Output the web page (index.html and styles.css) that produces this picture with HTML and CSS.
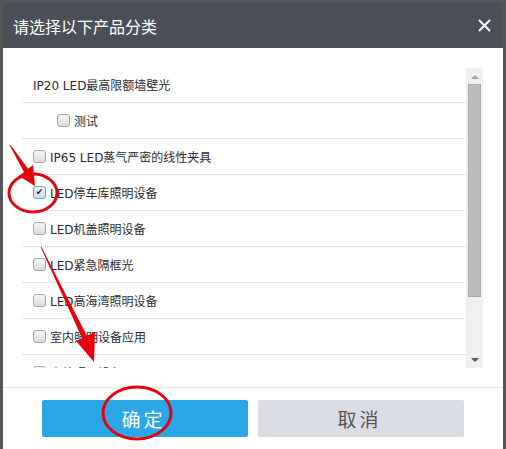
FILE: index.html
```html
<!DOCTYPE html>
<html>
<head>
    <title>请选择以下产品分类</title>
    <link rel="stylesheet" href="styles.css">
</head>
<body>
    <div class="dialog">
        <div class="dialog-header">
            <span class="dialog-title">请选择以下产品分类</span>
            <svg class="close" width="13" height="13" viewBox="0 0 13 13">
                <path d="M1 1 L12 12 M12 1 L1 12" stroke="#fff" stroke-width="2"/>
            </svg>
        </div>

        <div class="dialog-body">
            <div class="list-box">
                <ul class="cat-list">
                    <li class="cat-row">IP20 LED最高限额墙壁光</li>
                    <li class="cat-row sub"><span class="check"></span>测试</li>
                    <li class="cat-row"><span class="check"></span>IP65 LED蒸气严密的线性夹具</li>
                    <li class="cat-row"><span class="check checked">✔</span>LED停车库照明设备</li>
                    <li class="cat-row"><span class="check"></span>LED机盖照明设备</li>
                    <li class="cat-row"><span class="check"></span>LED紧急隔框光</li>
                    <li class="cat-row"><span class="check"></span>LED高海湾照明设备</li>
                    <li class="cat-row"><span class="check"></span>室内照明设备应用</li>
                    <li class="cat-row"><span class="check"></span>户外照明设备</li>
                </ul>
                <div class="scrollbar">
                    <span class="arrow up"></span>
                    <div class="thumb"></div>
                    <span class="arrow down"></span>
                </div>
            </div>
        </div>

        <div class="dialog-footer">
            <button class="btn btn-ok">确定</button>
            <button class="btn btn-cancel">取消</button>
        </div>
    </div>

    <!-- red marks drawn on top of the screenshot -->
    <svg class="marks" width="506" height="449" viewBox="0 0 506 449">
        <ellipse cx="33" cy="193" rx="24" ry="19" fill="none" stroke="#e8000b" stroke-width="3"/>
        <polygon points="9.5,145 10.5,145 29,170 24.5,173" fill="#e8000b"/>
        <polygon points="35,186 19,176 33,165" fill="#e8000b"/>
        <polygon points="40.5,247 41.5,247 87.5,337 82.5,339" fill="#e8000b"/>
        <polygon points="94,362 76,341 95,332" fill="#e8000b"/>
        <ellipse cx="137" cy="413" rx="34" ry="26" fill="none" stroke="#e8000b" stroke-width="3"/>
    </svg>
</body>
</html>
```

FILE: styles.css
```css
body {
    margin: 0;
    padding: 3px 3px 0 3px;
    background-color: #565656;
    font-family: "DejaVu Sans", "Noto Sans CJK SC", sans-serif;
    height: 446px;
    overflow: hidden;
}

.dialog {
    width: 500px;
    height: 446px;
    background-color: #fff;
}

.dialog-header {
    height: 45px;
    background-color: #4b5058;
    display: flex;
    align-items: center;
    justify-content: space-between;
    padding: 0 12px 0 10px;
}

.dialog-title {
    color: #fff;
    font-family: "Noto Sans CJK SC", sans-serif;
    font-size: 16px;
}

.close {
    display: block;
}

.dialog-body {
    padding: 19px 20px 19px 20px;
}

.list-box {
    display: flex;
    height: 301px;
    overflow: hidden;
}

.cat-list {
    flex: 1;
    list-style: none;
    margin: 0;
    padding: 0;
}

.cat-row {
    height: 35px;
    border-bottom: 1px dotted #cfcfcf;
    display: flex;
    align-items: center;
    padding-left: 10px;
    font-size: 12px;
    color: #2b2b33;
}

.cat-row.sub {
    padding-left: 34px;
}

.check {
    width: 11px;
    height: 11px;
    border: 1px solid #a6a6a6;
    border-radius: 3px;
    background: linear-gradient(#f7f7f7, #d9d9d9);
    margin-right: 4px;
    display: flex;
    align-items: center;
    justify-content: center;
    font-size: 9px;
    color: #222;
    line-height: 1;
}

.check.checked {
    border-color: #6d9fdc;
    background: linear-gradient(#eaf2fb, #cfdcec);
}

.scrollbar {
    width: 17px;
    background-color: #f0f0f0;
    display: flex;
    flex-direction: column;
    align-items: center;
    margin-top: 1px;
}

.arrow {
    width: 0;
    height: 0;
    border-left: 4px solid transparent;
    border-right: 4px solid transparent;
}

.arrow.up {
    border-bottom: 4px solid #a3a3a3;
    margin: 7px 0 5px;
}

.arrow.down {
    border-top: 4px solid #555;
    margin: auto 0 6px;
}

.thumb {
    width: 11px;
    height: 211px;
    background-color: #bcbcbc;
    border: 1px solid #a9a9a9;
}

.dialog-footer {
    border-top: 1px solid #e5e5e5;
    padding: 12px 0;
    display: flex;
    justify-content: center;
    gap: 10px;
}

.btn {
    width: 206px;
    height: 37px;
    border: none;
    border-radius: 2px;
    font-family: "Noto Sans CJK SC", sans-serif;
    font-size: 19px;
    letter-spacing: 3px;
    padding-left: 3px;
}

.btn-ok {
    background-color: #29a7e7;
    color: #fff;
}

.btn-cancel {
    background-color: #dadde3;
    color: #555;
}

.marks {
    position: absolute;
    top: 0;
    left: 0;
    pointer-events: none;
}
```
